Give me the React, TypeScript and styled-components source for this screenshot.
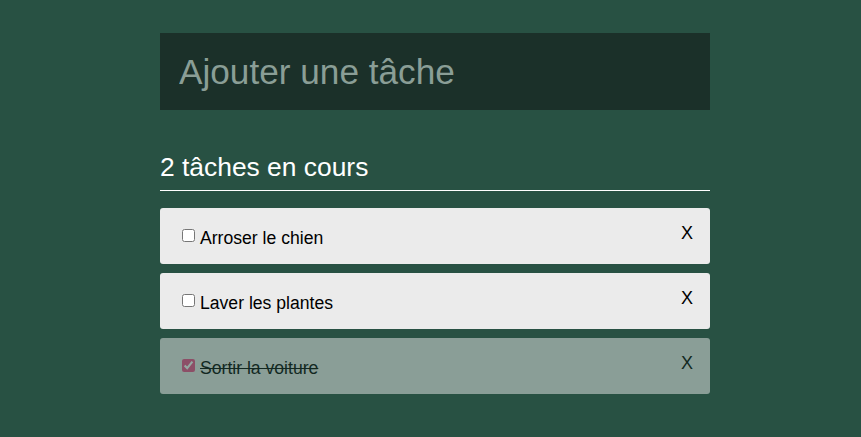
import React, { useState } from "react";
import styled, { createGlobalStyle } from "styled-components";

const Global = createGlobalStyle`
  html, body { margin: 0; padding: 0; background: #285143; }
  body { font-family: "Liberation Sans", Arial, sans-serif; }
`;

const Page = styled.div`
  padding: 33px 0 40px 160px;
`;

const Column = styled.div`
  width: 550px;
  display: flex;
  flex-direction: column;
`;

const TaskInput = styled.input`
  box-sizing: border-box;
  height: 77px;
  width: 100%;
  border: none;
  outline: none;
  background: #1b3029;
  color: #ffffff;
  padding: 0 18px 0 19px;
  font-family: "Liberation Sans", Arial, sans-serif;
  font-size: 35.2px;
  &::placeholder { color: #8a9e96; }
`;

const Heading = styled.h2`
  margin: 42px 0 17px;
  padding-bottom: 8px;
  border-bottom: 1px solid #ffffff;
  color: #ffffff;
  font-weight: 400;
  font-size: 26.4px;
  line-height: 30px;
`;

const List = styled.ul`
  list-style: none;
  margin: 0;
  padding: 0;
  display: flex;
  flex-direction: column;
  gap: 9px;
`;

const Item = styled.li<{ $done: boolean }>`
  box-sizing: border-box;
  height: 56px;
  background: #ebebeb;
  border-radius: 3px;
  display: flex;
  align-items: center;
  justify-content: space-between;
  padding: 4px 17px 0 22px;
  opacity: ${(p) => (p.$done ? 0.5 : 1)};
`;

const Label = styled.label<{ $done: boolean }>`
  display: flex;
  align-items: center;
  font-size: 17.6px;
  color: #000;
  text-decoration: ${(p) => (p.$done ? "line-through" : "none")};
`;

const Check = styled.input`
  width: 13px;
  height: 13px;
  margin: 0 5px 0 0;
  position: relative;
  top: -3px;
  accent-color: #f04f8c;
`;

const Remove = styled.button`
  border: none;
  background: none;
  padding: 0;
  margin-top: -9px;
  font-family: "Liberation Sans", Arial, sans-serif;
  font-size: 18px;
  color: #000;
  cursor: pointer;
`;

export default function App() {
  const [tasks, setTasks] = useState([
    { id: 1, text: "Arroser le chien", done: false },
    { id: 2, text: "Laver les plantes", done: false },
    { id: 3, text: "Sortir la voiture", done: true },
  ]);
  const remaining = tasks.filter((t) => !t.done).length;
  return (
    <Page>
      <Global />
      <Column>
        <TaskInput placeholder="Ajouter une tâche" />
        <Heading>{remaining} tâches en cours</Heading>
        <List>
          {tasks.map((t) => (
            <Item key={t.id} $done={t.done}>
              <Label $done={t.done}>
                <Check
                  type="checkbox"
                  checked={t.done}
                  onChange={() =>
                    setTasks((ts) => ts.map((x) => (x.id === t.id ? { ...x, done: !x.done } : x)))
                  }
                />
                {t.text}
              </Label>
              <Remove onClick={() => setTasks((ts) => ts.filter((x) => x.id !== t.id))}>X</Remove>
            </Item>
          ))}
        </List>
      </Column>
    </Page>
  );
}
